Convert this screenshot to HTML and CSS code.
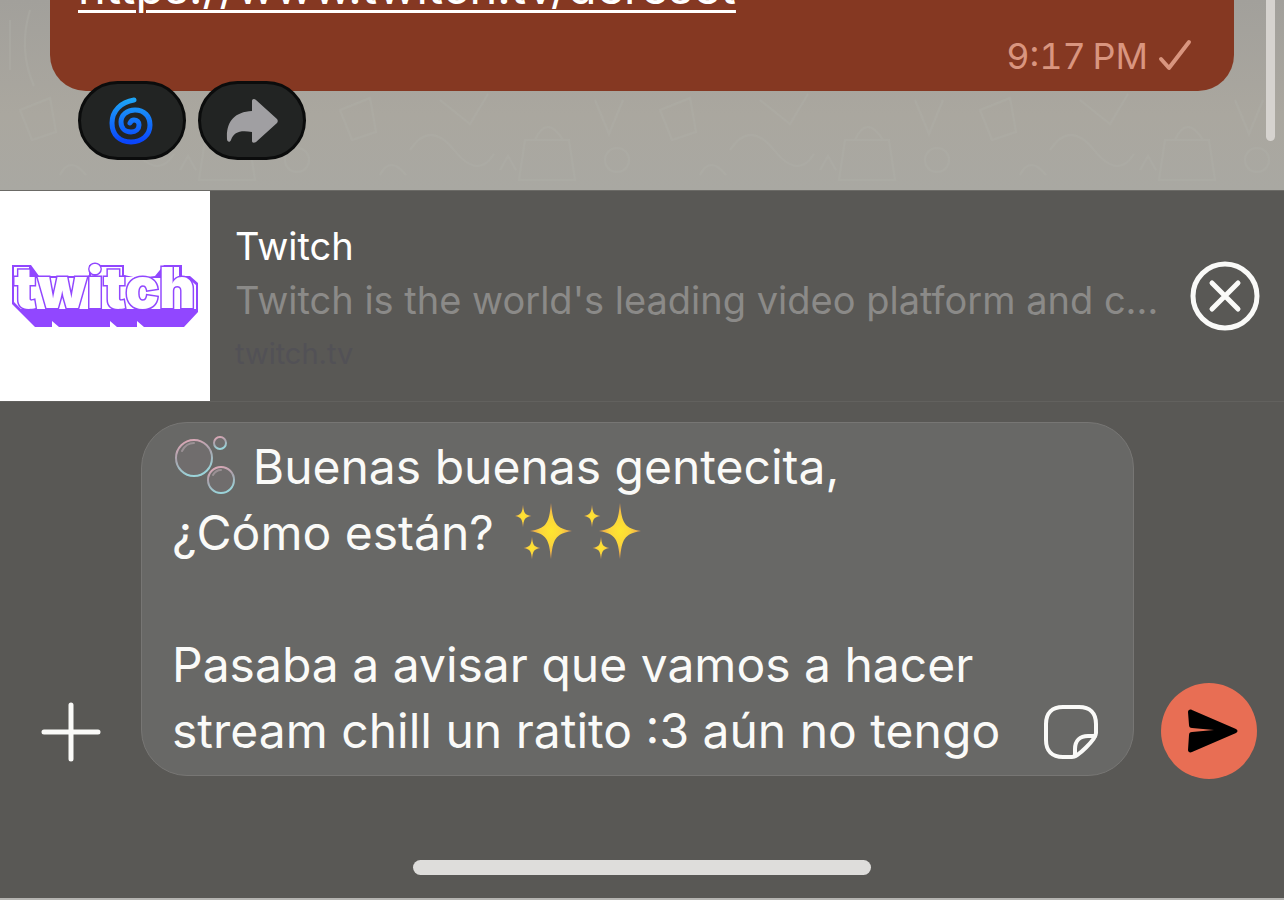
FILE: index.html
```html
<!DOCTYPE html>
<html lang="es">
<head>
    <meta charset="UTF-8">
    <meta name="viewport" content="width=device-width, initial-scale=1.0">
    <title>Chat</title>
    <link rel="stylesheet" href="styles.css">
</head>
<body>

    <main class="chat">
        <svg class="doodles" width="100%" height="100%" aria-hidden="true">
            <defs>
                <pattern id="doodle" width="320" height="190" patternUnits="userSpaceOnUse">
                    <path d="M20 110l12 30 24-8-6-34zM90 150q20-30 44 0t40 4M120 100l30 24 18-30M205 140h44l6 40h-56zM215 140q12-26 28 0M275 100l14 34 14-34M285 160a12 12 0 1 0 24 0 12 12 0 1 0-24 0M60 175q10-20 26 0M10 20v50M30 10q-12 40 4 76M180 170l8-14 8 14"/>
                </pattern>
            </defs>
            <rect width="100%" height="100%" fill="url(#doodle)"/>
        </svg>

        <article class="bubble">
            <a class="link" href="https://www.twitch.tv/dereset">https://www.twitch.tv/dereset</a>
            <div class="meta">
                <time>9:17&thinsp;PM</time>
                <svg width="34" height="34" viewBox="0 0 34 34"><path d="M3 20l8 9L31 3"/></svg>
            </div>
        </article>

        <div class="reactions">
            <button class="pill" aria-label="Reacción">
                <svg width="46" height="50" viewBox="0 0 46 50">
                    <defs>
                        <linearGradient id="swirl" x1="0" y1="0" x2="0" y2="1">
                            <stop offset="0" stop-color="#1da4f6"/>
                            <stop offset="1" stop-color="#0a45fb"/>
                        </linearGradient>
                    </defs>
                    <path class="swirl" stroke="url(#swirl)" d="M25 4C12 6 3 15 3 27c0 12 8 19 19 19 11 0 19-7 19-17 0-9-6-15-15-15-8 0-14 5-14 12 0 6 4 10 10 10 5 0 8-3 8-7 0-3-2-5-5-5-2 0-3 1-4 3"/>
                </svg>
            </button>
            <button class="pill" aria-label="Reenviar">
                <svg width="54" height="46" viewBox="0 0 54 46">
                    <path fill="#a09fa2" d="M27 3c0-2 2-3 4-1l21 19c1 1 1 3 0 4L31 44c-2 1-4 1-4-1V34C15 32 9 34 6 42c-1 3-4 2-4-1C1 24 9 14 27 13z"/>
                </svg>
            </button>
        </div>

        <div class="scrollbar"></div>
    </main>

    <section class="preview">
        <svg class="thumb" width="210" height="210" viewBox="0 0 210 210" role="img" aria-label="Twitch">
            <path fill="#9147ff" d="M12 74h19l8 11h50V74h35v10l14 3 17-2 9-11h18v11h8l8 7v29l-14 15h-40l-7-6v6h-20l-7-6v6H59l-7-6v6H35L12 113z"/>
            <path fill="#fff" d="M14 76h15v11h62V76h31v10h12l3 4 5-3h22V76h15v11h9l8 7v24H21l-7-7z"/>
            <text class="wordmark" x="14" y="117">twitch</text>
        </svg>
        <div class="preview-text">
            <div class="title">Twitch</div>
            <div class="desc">Twitch is the world's leading video platform and community</div>
            <div class="host">twitch.tv</div>
        </div>
        <button class="close" aria-label="Cerrar">
            <svg width="70" height="70" viewBox="0 0 70 70">
                <circle cx="35" cy="35" r="32"/>
                <path d="M22 22l26 26M48 22L22 48"/>
            </svg>
        </button>
    </section>

    <form class="composer">
        <button class="add" type="button" aria-label="Adjuntar">
            <svg width="60" height="60" viewBox="0 0 60 60"><path d="M30 3v54M3 30h54"/></svg>
        </button>

        <div class="field">
            <textarea class="message" rows="5" aria-label="Mensaje" spellcheck="false">
&emsp;&ensp;&thinsp;Buenas buenas gentecita,
¿Cómo están?

Pasaba a avisar que vamos a hacer
stream chill un ratito :3 aún no tengo</textarea>
            <svg class="emoji bubbles" width="62" height="60" viewBox="0 0 62 60">
                <defs>
                    <linearGradient id="soap" x1="0" y1="0" x2="0.3" y2="1">
                        <stop offset="0" stop-color="#e5a9b8"/>
                        <stop offset="0.5" stop-color="#a9a3ad"/>
                        <stop offset="1" stop-color="#9bd3d9"/>
                    </linearGradient>
                </defs>
                <g fill="#777273" fill-opacity="0.5" stroke="url(#soap)" stroke-width="2">
                    <circle cx="20" cy="23" r="18"/>
                    <circle cx="46" cy="8" r="6"/>
                    <circle cx="47" cy="45" r="13"/>
                </g>
                <path d="M8 16q4-8 12-8M39 40q3-5 8-5" fill="none" stroke="#d9c6cf" stroke-width="2" stroke-linecap="round" opacity="0.4"/>
            </svg>
            <div class="emoji sparkles">
                <svg width="69" height="60" viewBox="0 0 69 60">
                    <defs>
                        <radialGradient id="gold">
                            <stop offset="0" stop-color="#ffe62e"/>
                            <stop offset="0.5" stop-color="#fbd53c"/>
                            <stop offset="1" stop-color="#e79a52"/>
                        </radialGradient>
                        <path id="star" fill="url(#gold)" d="M0-28C2-8 4-3 21 0 4 3 2 8 0 28-2 8-4 3-21 0-4-3-2-8 0-28z"/>
                    </defs>
                    <use href="#star" transform="translate(36 30)"/>
                    <use href="#star" transform="translate(8 15) scale(0.4)"/>
                    <use href="#star" transform="translate(17 47) scale(0.4)"/>
                </svg>
                <svg width="69" height="60" viewBox="0 0 69 60">
                    <use href="#star" transform="translate(36 30)"/>
                    <use href="#star" transform="translate(8 15) scale(0.4)"/>
                    <use href="#star" transform="translate(17 47) scale(0.4)"/>
                </svg>
            </div>
            <button class="sticker" type="button" aria-label="Stickers">
                <svg width="56" height="56" viewBox="0 0 56 56">
                    <path d="M20 3h16c11 0 17 6 17 17v9c0 6-18 24-24 24h-9C9 53 3 47 3 36V20C3 9 9 3 20 3z"/>
                    <path d="M52 32h-7c-8 0-13 5-13 13v7"/>
                </svg>
            </button>
        </div>

        <button class="send" type="submit" aria-label="Enviar">
            <svg width="50" height="44" viewBox="0 0 50 44">
                <path d="M0 3C0 1 2 0 4 1l44 19c2 1 2 3 0 4L4 43c-2 1-4 0-4-2l1-15c0-2 1-3 3-3l22-2L4 19c-2 0-3-1-3-3z"/>
            </svg>
        </button>
    </form>

    <footer class="home"><div class="home-bar"></div></footer>

</body>
</html>
```
FILE: styles.css
```css
* {
    box-sizing: border-box;
}

body {
    margin: 0;
    min-height: 100vh;
    display: flex;
    flex-direction: column;
    background: #595855;
    color: #fff;
    font-family: Inter, "Liberation Sans", sans-serif;
}

button {
    display: flex;
    align-items: center;
    justify-content: center;
    padding: 0;
    border: none;
    background: none;
    cursor: pointer;
}

/* Chat */
.chat {
    position: relative;
    display: flex;
    flex-direction: column;
    justify-content: flex-end;
    height: 190px;
    padding: 0 50px 30px;
    overflow: hidden;
    background: linear-gradient(#a2a09b, #aaa79f 60%, #a9a8a2);
}

.doodles {
    position: absolute;
    inset: 0;
}

.doodles path {
    fill: none;
    stroke: #b0aea8;
    stroke-width: 2;
    opacity: 0.4;
}

.bubble {
    position: relative;
    flex-shrink: 0;
    padding: 16px 42px 13px 28px;
    border-radius: 36px;
    background: #853822;
}

.link {
    display: block;
    color: #fff;
    font-size: 47px;
    line-height: 60px;
    text-decoration-thickness: 3px;
    text-underline-offset: 6px;
}

.meta {
    display: flex;
    align-items: center;
    justify-content: flex-end;
    gap: 10px;
    margin-top: 17px;
    color: #d9957f;
    font-size: 36px;
    font-variant-numeric: tabular-nums;
    line-height: 44px;
}

.meta path {
    fill: none;
    stroke: #d9957f;
    stroke-width: 4;
    stroke-linecap: round;
    stroke-linejoin: round;
}

.reactions {
    position: relative;
    display: flex;
    flex-shrink: 0;
    gap: 12px;
    margin: -10px 28px 0;
}

.pill {
    width: 108px;
    height: 79px;
    border: 3px solid #0b0c0c;
    border-radius: 40px;
    background: #222423;
}

.swirl {
    fill: none;
    stroke-width: 5;
    stroke-linecap: round;
}

.scrollbar {
    position: absolute;
    top: 0;
    right: 9px;
    width: 9px;
    height: 141px;
    border-radius: 0 0 5px 5px;
    background: #d6d3cf;
}

/* Link preview */
.preview {
    display: flex;
    align-items: center;
    border-top: 1px solid #6b6a66;
    border-bottom: 1px solid #62615e;
}

.thumb {
    flex-shrink: 0;
    background: #fff;
}

.wordmark {
    fill: #fff;
    stroke: #9147ff;
    stroke-width: 3;
    paint-order: stroke;
    font-size: 56px;
    font-weight: 900;
}

.preview-text {
    flex: 1;
    min-width: 0;
    padding: 8px 26px 0 25px;
    font-size: 38px;
    line-height: 54px;
}

.desc {
    overflow: hidden;
    white-space: nowrap;
    text-overflow: ellipsis;
    color: #8b8a88;
}

.host {
    color: #525156;
    font-size: 29px;
}

.close {
    margin-right: 24px;
}

.close svg,
.add svg,
.sticker svg {
    fill: none;
    stroke: #fafaf8;
    stroke-width: 5;
    stroke-linecap: round;
}

/* Composer */
.composer {
    display: flex;
    align-items: flex-end;
    padding-top: 20px;
}

.add {
    width: 141px;
    height: 88px;
}

.field {
    position: relative;
    flex: 1;
    display: flex;
    align-items: flex-end;
    min-width: 0;
    border: 1px solid #777674;
    border-radius: 46px;
    background: #686866;
}

.message {
    flex: 1;
    min-width: 0;
    height: 352px;
    padding: 11px 0 11px 30px;
    border: none;
    outline: none;
    resize: none;
    overflow: hidden;
    background: none;
    color: #fafaf8;
    font-family: inherit;
    font-size: 48px;
    line-height: 66px;
    white-space: pre;
}

.emoji {
    position: absolute;
    display: flex;
    pointer-events: none;
}

.bubbles {
    top: 12px;
    left: 32px;
}

.sparkles {
    top: 78px;
    left: 373px;
}

.sticker {
    flex-shrink: 0;
    width: 90px;
    height: 86px;
    padding-right: 34px;
    justify-content: flex-end;
}

.sticker svg {
    stroke-width: 4;
}

.send {
    flex-shrink: 0;
    width: 96px;
    height: 96px;
    margin: 0 27px -3px;
    border-radius: 50%;
    background: #e86e54;
    padding-left: 8px;
}

/* Home indicator */
.home {
    flex: 1;
    display: flex;
    align-items: flex-end;
    justify-content: center;
    padding-bottom: 23px;
    border-bottom: 2px solid #b5b4b1;
}

.home-bar {
    width: 458px;
    max-width: 60%;
    height: 15px;
    border-radius: 8px;
    background: #dedddb;
}
```
